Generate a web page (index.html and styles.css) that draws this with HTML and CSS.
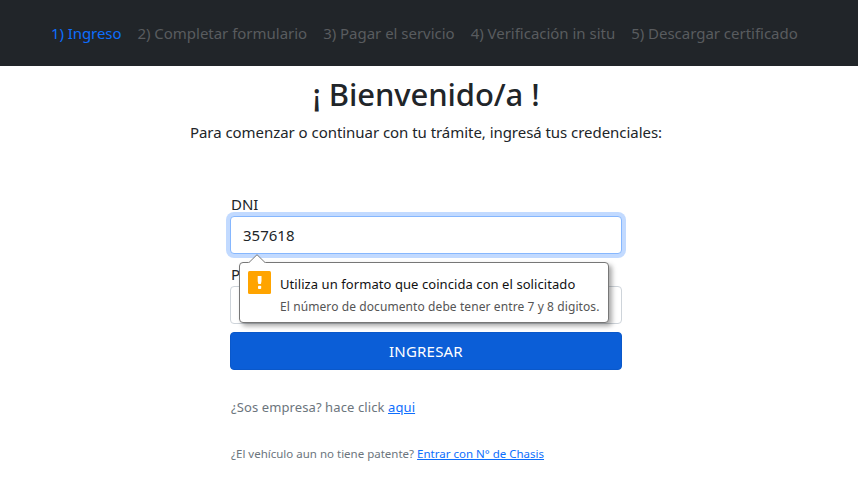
FILE: index.html
```html
<!DOCTYPE html>
<html lang="es">
<head>
<meta charset="utf-8">
<title>Ingreso</title>
<link rel="stylesheet" href="styles.css">
</head>
<body>
<nav class="steps">
  <a class="step step-active">1) Ingreso</a>
  <a class="step">2) Completar formulario</a>
  <a class="step">3) Pagar el servicio</a>
  <a class="step">4) Verificación in situ</a>
  <a class="step">5) Descargar certificado</a>
</nav>
<main class="content">
  <h1 class="title">¡ Bienvenido/a !</h1>
  <p class="lead">Para comenzar o continuar con tu trámite, ingresá tus credenciales:</p>
  <form class="login">
    <label class="label">DNI</label>
    <div class="field field-focus"><span class="value">357618</span>
      <div class="bubble">
        <svg class="arrow" width="18" height="9" viewBox="0 0 18 9"><path d="M0 9 L1 8.5 L9 0.7 L17 8.5 L18 9Z" fill="#fff"/><path d="M1 8.5 L9 0.7 L17 8.5" fill="none" stroke="#777" stroke-width="1"/></svg>
        <svg class="warn" width="23" height="23" viewBox="0 0 23 23"><rect width="23" height="23" rx="1.5" fill="#ffa400"/><path d="M9.7 5h3.8v5l-.6 3h-2.6l-.6-3z" fill="#fff"/><rect x="10" y="14.8" width="3.2" height="3.2" rx=".8" fill="#fff"/></svg>
        <div class="messages">
          <div class="message">Utiliza un formato que coincida con el solicitado</div>
          <div class="detail">El número de documento debe tener entre 7 y 8 digitos.</div>
        </div>
      </div>
    </div>
    <label class="label label-second">Patente</label>
    <div class="field"></div>
    <button class="submit" type="button">INGRESAR</button>
  </form>
  <p class="company">¿Sos empresa? hace click <a class="link">aqui</a></p>
  <p class="chassis">¿El vehículo aun no tiene patente? <a class="link">Entrar con N° de Chasis</a></p>
</main>
</body>
</html>
```

FILE: styles.css
```css
* { box-sizing: border-box; }
body {
  margin: 0;
  height: 488px;
  overflow: hidden;
  background: #fff;
  color: #212529;
  font-family: "Noto Sans", "Open Sans", sans-serif;
  font-size: 15px;
  line-height: 24px;
}
.steps {
  height: 66px;
  padding: 21px 0 0 51px;
  display: flex;
  gap: 16px;
  background: #212529;
  color: #595c5f;
  letter-spacing: -.02px;
  white-space: nowrap;
}
.step-active { color: #0d6efd; letter-spacing: -.08px; }
.content { width: 392px; margin-left: 230px; white-space: nowrap; }
.title {
  margin: 9px 0 0;
  font-size: 31px;
  line-height: 38px;
  font-weight: 500;
  letter-spacing: -.1px;
  text-align: center;
}
.lead { margin: 7px -60px 0; text-align: center; letter-spacing: -.045px; }
.login { margin: 48px 0 0; }
.label { display: block; height: 24px; padding-left: 1px; }
.field {
  position: relative;
  height: 38px;
  padding: 6px 12px;
  border: 1px solid #ced4da;
  border-radius: 4px;
  background: #fff;
}
.field-focus {
  border-color: #86b7fe;
  box-shadow: 0 0 0 4px #c2daff;
}
.label-second { margin-top: 8px; }
.bubble {
  position: absolute;
  z-index: 2;
  left: 8px;
  top: 45px;
  width: 370px;
  height: 61px;
  padding: 8px;
  display: flex;
  gap: 9px;
  border: 1px solid #777;
  border-radius: 4px;
  background: #fff;
  box-shadow: 3px 3px 5px rgba(0, 0, 0, .35);
}
.arrow { position: absolute; left: 8px; top: -9px; }
.warn { flex: none; }
.message { margin-top: 2px; color: #111; font-size: 13px; line-height: 22px; letter-spacing: .07px; }
.detail { color: #555; font-size: 12px; line-height: 23px; letter-spacing: .09px; }
.submit {
  display: block;
  width: 100%;
  height: 38px;
  margin-top: 8px;
  padding: 0;
  border: 1px solid #0a58ca;
  border-radius: 4px;
  background: #0b5ed7;
  color: #fff;
  font: inherit;
  letter-spacing: .2px;
}
.company { margin: 27px 0 0 1px; color: #6c757d; font-size: 13px; line-height: 21px; letter-spacing: .1px; }
.chassis { margin: 27px 0 0 1px; color: #6c757d; font-size: 11.5px; line-height: 18px; }
.link { color: #0d6efd; text-decoration: underline; }
```
